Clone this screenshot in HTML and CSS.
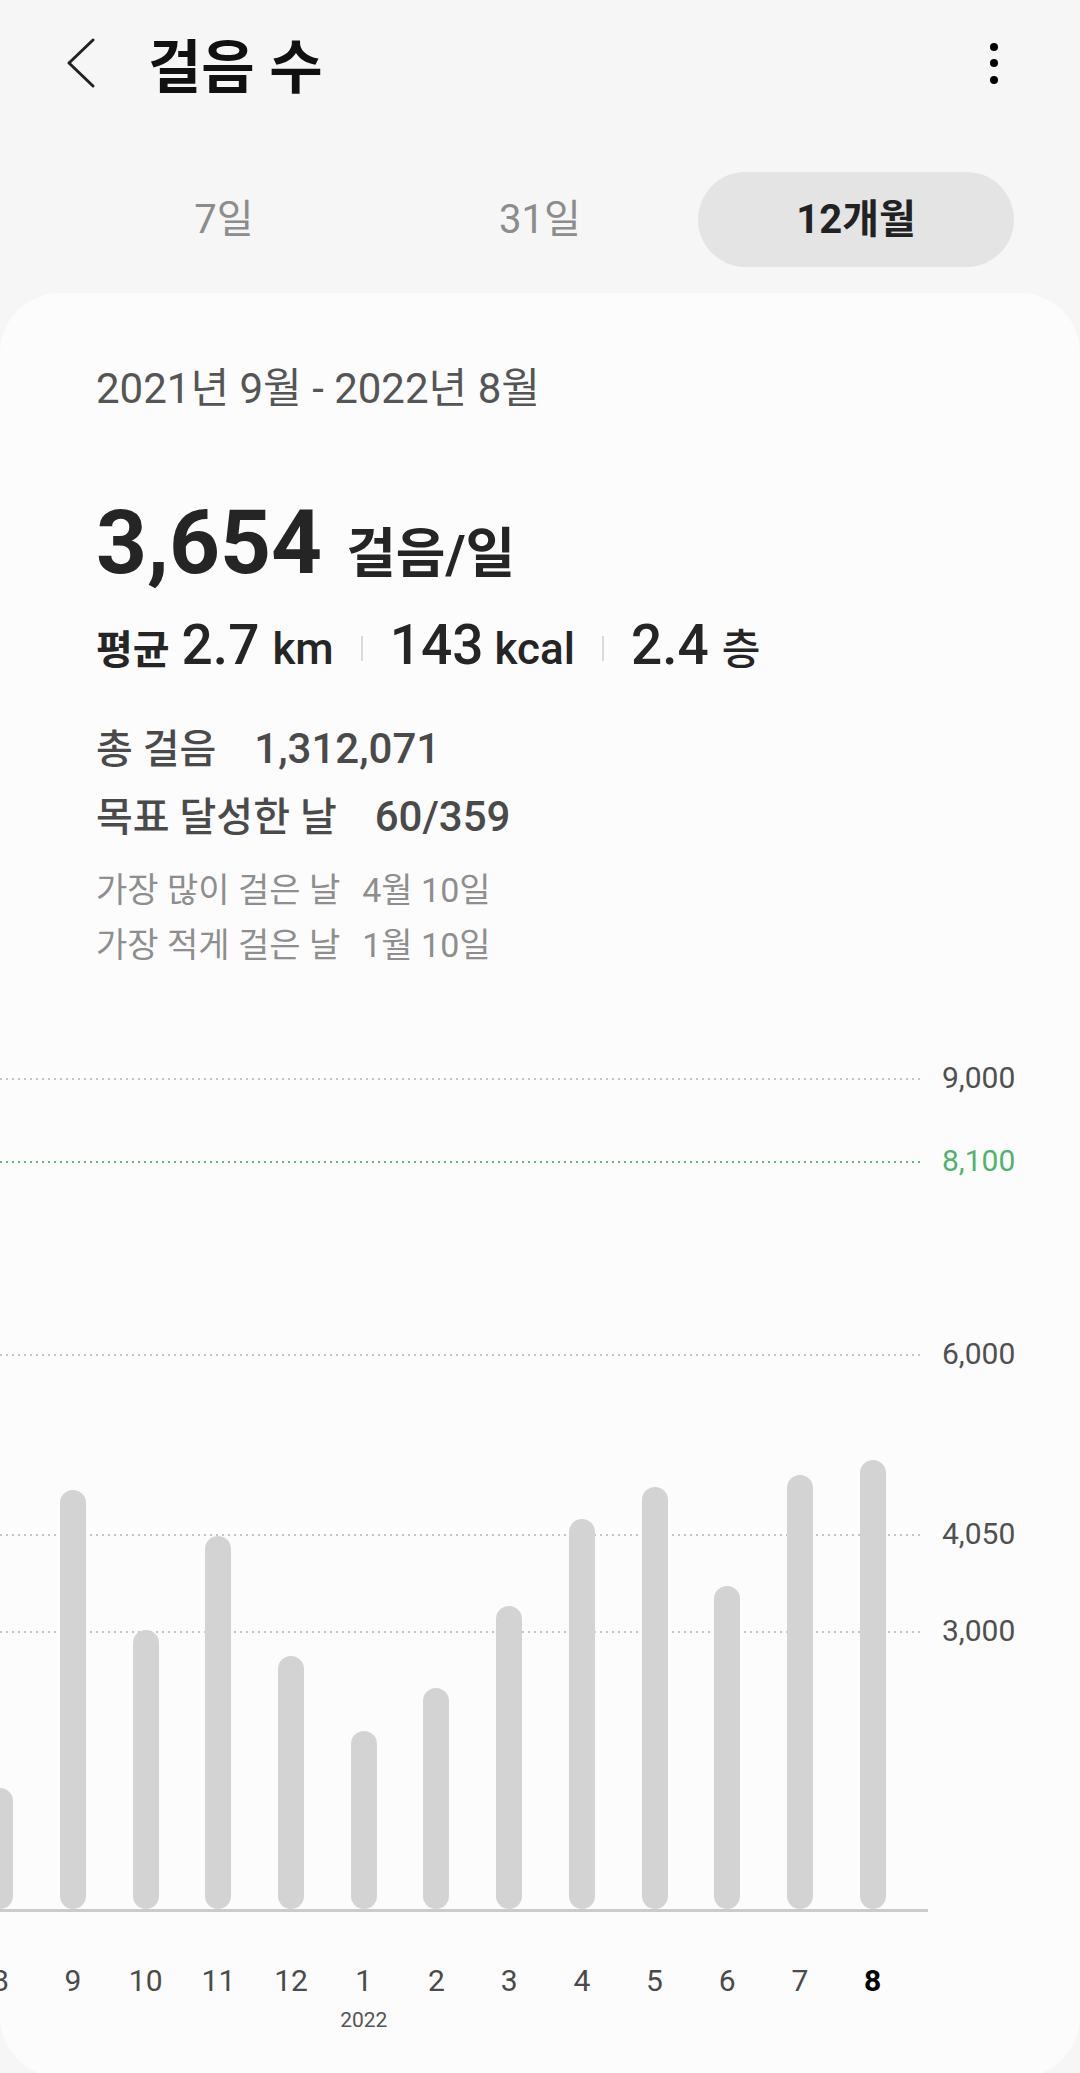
FILE: index.html
```html
<!DOCTYPE html>
<html lang="ko">
<head>
  <meta charset="UTF-8">
  <meta name="viewport" content="width=device-width, initial-scale=1.0">
  <title>걸음 수</title>
  <link rel="stylesheet" href="styles.css">
</head>
<body>

<header class="topbar">
  <button class="back" aria-label="뒤로">
    <svg width="30" height="50" viewBox="0 0 30 50"><path d="M27 2 L3 25 L27 48" fill="none" stroke="#222" stroke-width="3" stroke-linecap="round" stroke-linejoin="round"/></svg>
  </button>
  <h1 class="title">걸음 수</h1>
  <button class="more" aria-label="더보기">
    <svg width="20" height="50" viewBox="0 0 20 50"><circle cx="10" cy="9" r="4"/><circle cx="10" cy="25" r="4"/><circle cx="10" cy="42" r="4"/></svg>
  </button>
</header>

<nav class="tabs">
  <div class="tab">7일</div>
  <div class="tab">31일</div>
  <div class="tab active">12개월</div>
</nav>

<main class="card">
  <div class="period">2021년 9월 - 2022년 8월</div>

  <div class="daily">
    <span class="daily-num">3,654</span>
    <span class="daily-unit">걸음/일</span>
  </div>

  <div class="avg">
    <span class="avg-label">평균</span>
    <span class="avg-num">2.7</span><span class="avg-unit">km</span>
    <i class="sep"></i>
    <span class="avg-num">143</span><span class="avg-unit unit-kcal">kcal</span>
    <i class="sep"></i>
    <span class="avg-num">2.4</span><span class="avg-unit unit-floor">층</span>
  </div>

  <div class="totals">
    <div class="total-row"><span>총 걸음</span><b>1,312,071</b></div>
    <div class="total-row"><span>목표 달성한 날</span><b>60/359</b></div>
  </div>

  <div class="extremes">
    <div>가장 많이 걸은 날<span class="day">4월 10일</span></div>
    <div>가장 적게 걸은 날<span class="day">1월 10일</span></div>
  </div>

  <section class="chart">
    <div class="plot">
      <div class="gline" style="bottom: 829px"><span>9,000</span></div>
      <div class="gline goal" style="bottom: 746px"><span>8,100</span></div>
      <div class="gline" style="bottom: 553px"><span>6,000</span></div>
      <div class="gline" style="bottom: 373px"><span>4,050</span></div>
      <div class="gline" style="bottom: 276px"><span>3,000</span></div>

      <div class="bars">
        <div class="col"><div class="bar" style="height: 121px"></div></div>
        <div class="col"><div class="bar" style="height: 419px"></div></div>
        <div class="col"><div class="bar" style="height: 279px"></div></div>
        <div class="col"><div class="bar" style="height: 373px"></div></div>
        <div class="col"><div class="bar" style="height: 253px"></div></div>
        <div class="col"><div class="bar" style="height: 178px"></div></div>
        <div class="col"><div class="bar" style="height: 221px"></div></div>
        <div class="col"><div class="bar" style="height: 303px"></div></div>
        <div class="col"><div class="bar" style="height: 390px"></div></div>
        <div class="col"><div class="bar" style="height: 422px"></div></div>
        <div class="col"><div class="bar" style="height: 323px"></div></div>
        <div class="col"><div class="bar" style="height: 434px"></div></div>
        <div class="col"><div class="bar" style="height: 449px"></div></div>
      </div>
    </div>

    <div class="months">
      <span>8</span><span>9</span><span>10</span><span>11</span><span>12</span>
      <span>1</span><span>2</span><span>3</span><span>4</span><span>5</span>
      <span>6</span><span>7</span><span class="current">8</span>
      <span class="year">2022</span>
    </div>
  </section>
</main>

</body>
</html>
```

FILE: styles.css
```css
body {
  margin: 0;
  background-color: #f6f6f6;
  font-family: 'Roboto', 'Noto Sans CJK KR', sans-serif;
  color: #252525;
}

button {
  border: none;
  background: none;
  padding: 0;
  cursor: pointer;
}

/* header */
.topbar {
  display: flex;
  align-items: center;
  height: 126px;
  padding: 0 76px 0 66px;
}

.back svg,
.more svg {
  display: block;
}

.title {
  margin: 0 0 0 52px;
  font-size: 58px;
  font-weight: 700;
  color: #111;
}

.more {
  margin-left: auto;
}

/* period tabs */
.tabs {
  display: grid;
  grid-template-columns: repeat(3, 316px);
  margin: 46px 0 0 66px;
}

.tab {
  height: 95px;
  line-height: 95px;
  border-radius: 48px;
  text-align: center;
  font-size: 40px;
  color: #8c8c8c;
}

.tab.active {
  background-color: #e4e4e4;
  color: #222;
  font-weight: 700;
}

/* card */
.card {
  margin-top: 26px;
  padding: 71px 0 44px 96px;
  background-color: #fcfcfc;
  border-radius: 60px;
  overflow: hidden;
}

.period {
  font-size: 42px;
  line-height: 50px;
  color: #555;
}

.daily {
  margin-top: 79px;
  line-height: 100px;
}

.daily-num {
  font-size: 89px;
  font-weight: 700;
}

.daily-unit {
  margin-left: 20px;
  font-size: 54px;
  font-weight: 700;
}

.avg {
  display: flex;
  align-items: baseline;
  margin-top: -3px;
  line-height: 60px;
}

.avg-label {
  font-size: 40px;
  font-weight: 700;
  margin-right: 12px;
}

.avg-num {
  font-size: 55px;
  font-weight: 500;
}

.avg-unit {
  margin-left: 13px;
  font-size: 44px;
  font-weight: 500;
}

.unit-kcal {
  margin-left: 11px;
}

.unit-floor {
  font-size: 42px;
}

.sep {
  align-self: center;
  width: 2px;
  height: 25px;
  margin: 0 27px;
  background-color: #dadada;
}

.totals {
  margin-top: 34px;
}

.total-row {
  font-size: 40px;
  line-height: 67px;
  color: #4a4a4a;
  font-weight: 500;
}

.total-row b {
  margin-left: 38px;
  font-size: 42px;
  font-weight: 500;
}

.extremes {
  margin-top: 12px;
  font-size: 34px;
  line-height: 55px;
  color: #8e8e8e;
}

.extremes .day {
  margin-left: 22px;
}

/* chart */
.chart {
  margin: 22px 0 0 -96px;
}

.plot {
  position: relative;
  width: 928px;
  height: 914px;
  border-bottom: 3px solid #cbcbcb;
}

.gline {
  position: absolute;
  left: 0;
  width: 923px;
  height: 2px;
  background: repeating-linear-gradient(to right, #c4c4c4 0 2px, transparent 2px 6px);
}

.gline span {
  position: absolute;
  left: 942px;
  top: -20px;
  font-size: 30px;
  line-height: 40px;
  color: #505050;
}

.gline.goal {
  background: repeating-linear-gradient(to right, #5cb97a 0 2px, transparent 2px 6px);
}

.gline.goal span {
  color: #4fb36c;
}

.bars {
  position: relative;
  display: grid;
  grid-template-columns: repeat(13, 72.7px);
  align-items: end;
  height: 100%;
  margin-left: -36px;
}

.bar {
  width: 26px;
  margin: 0 auto;
  border-radius: 13px;
  background-color: #d3d3d3;
}

.months {
  display: grid;
  grid-template-columns: repeat(13, 72.7px);
  margin: 49px 0 0 -36px;
  text-align: center;
  font-size: 30px;
  line-height: 40px;
  color: #4a4a4a;
}

.months .current {
  font-weight: 700;
  color: #000;
}

.months .year {
  grid-column: 6;
  margin-top: 6px;
  font-size: 21px;
  line-height: 26px;
  color: #555;
}
```
